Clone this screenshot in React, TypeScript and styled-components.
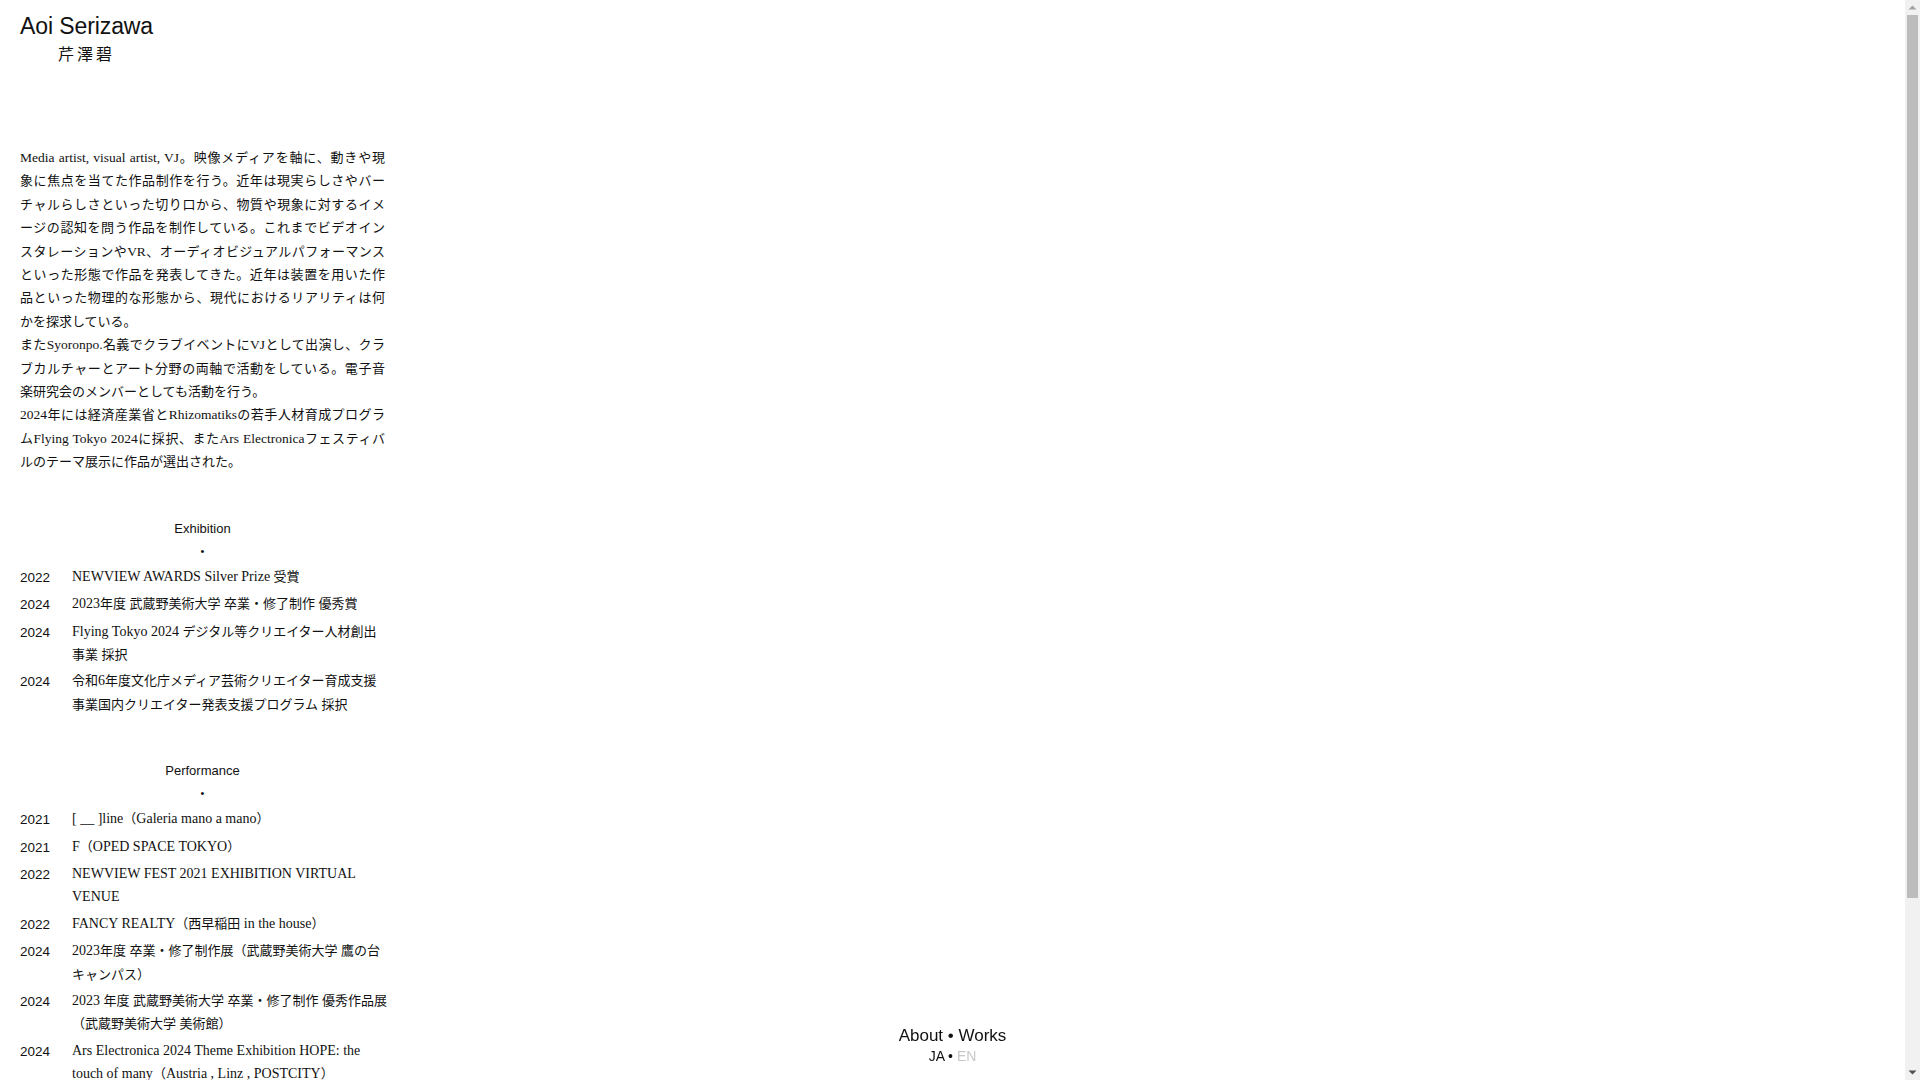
import styled, { createGlobalStyle } from 'styled-components';

interface Entry {
  year: string;
  lines: string[];
}

const bio: string[][] = [
  [
    'Media artist, visual artist, VJ。映像メディアを軸に、動きや現',
    '象に焦点を当てた作品制作を行う。近年は現実らしさやバー',
    'チャルらしさといった切り口から、物質や現象に対するイメ',
    'ージの認知を問う作品を制作している。これまでビデオイン',
    'スタレーションやVR、オーディオビジュアルパフォーマンス',
    'といった形態で作品を発表してきた。近年は装置を用いた作',
    '品といった物理的な形態から、現代におけるリアリティは何',
    'かを探求している。',
  ],
  [
    'またSyoronpo.名義でクラブイベントにVJとして出演し、クラ',
    'ブカルチャーとアート分野の両軸で活動をしている。電子音',
    '楽研究会のメンバーとしても活動を行う。',
  ],
  [
    '2024年には経済産業省とRhizomatiksの若手人材育成プログラ',
    'ムFlying Tokyo 2024に採択、またArs Electronicaフェスティバ',
    'ルのテーマ展示に作品が選出された。',
  ],
];

const exhibition: Entry[] = [
  { year: '2022', lines: ['NEWVIEW AWARDS Silver Prize 受賞'] },
  { year: '2024', lines: ['2023年度 武蔵野美術大学 卒業・修了制作 優秀賞'] },
  {
    year: '2024',
    lines: ['Flying Tokyo 2024 デジタル等クリエイター人材創出', '事業 採択'],
  },
  {
    year: '2024',
    lines: [
      '令和6年度文化庁メディア芸術クリエイター育成支援',
      '事業国内クリエイター発表支援プログラム 採択',
    ],
  },
];

const performance: Entry[] = [
  { year: '2021', lines: ['[ __ ]line（Galeria mano a mano）'] },
  { year: '2021', lines: ['F（OPED SPACE TOKYO）'] },
  { year: '2022', lines: ['NEWVIEW FEST 2021 EXHIBITION VIRTUAL', 'VENUE'] },
  { year: '2022', lines: ['FANCY REALTY（西早稲田 in the house）'] },
  {
    year: '2024',
    lines: ['2023年度 卒業・修了制作展（武蔵野美術大学 鷹の台', 'キャンパス）'],
  },
  {
    year: '2024',
    lines: ['2023 年度 武蔵野美術大学 卒業・修了制作 優秀作品展', '（武蔵野美術大学 美術館）'],
  },
  {
    year: '2024',
    lines: [
      'Ars Electronica 2024 Theme Exhibition HOPE: the',
      'touch of many（Austria , Linz , POSTCITY）',
    ],
  },
];

// latin runs use a slightly bigger serif, like the original's garamond
const LATIN = /([A-Za-z0-9.,:\[\]_ ]+)/;

function Mixed({ text, size }: { text: string; size: number }) {
  return (
    <>
      {text.split(LATIN).map((part, i) =>
        LATIN.test(part) ? (
          <Latin key={i} $size={size}>
            {part}
          </Latin>
        ) : (
          part
        ),
      )}
    </>
  );
}

function History({ title, entries }: { title: string; entries: Entry[] }) {
  return (
    <Section>
      <SectionTitle>{title}</SectionTitle>
      <Dot>•</Dot>
      <List>
        {entries.map((entry, i) => (
          <Item key={i}>
            <Year>{entry.year}</Year>
            <ItemText>
              {entry.lines.map((line, j) => (
                <span key={j}>
                  {j > 0 && <br />}
                  <Mixed text={line} size={14} />
                </span>
              ))}
            </ItemText>
          </Item>
        ))}
      </List>
    </Section>
  );
}

// the page scrolls; the window's classic scrollbar is drawn here
function Scrollbar() {
  return (
    <Track>
      <Arrow viewBox="0 0 15 15" $color="#a3a3a3">
        <path d="M3.5 9.5 L7.5 5.5 L11.5 9.5 Z" />
      </Arrow>
      <Thumb />
      <Gap />
      <Arrow viewBox="0 0 15 15" $color="#505050">
        <path d="M3.5 5.5 L7.5 9.5 L11.5 5.5 Z" />
      </Arrow>
    </Track>
  );
}

export default function App() {
  return (
    <>
      <GlobalStyle />
      <Page>
        <Header>
          <Name>Aoi Serizawa</Name>
          <NameJa>芹澤碧</NameJa>
        </Header>
        <Column>
          <Bio>
            {bio.map((para, i) => (
              <Para key={i}>
                {para.map((line, j) => (
                  <Line key={j} $fill={j < para.length - 1}>
                    <Mixed text={line} size={13.5} />
                  </Line>
                ))}
              </Para>
            ))}
          </Bio>
          <History title="Exhibition" entries={exhibition} />
          <History title="Performance" entries={performance} />
        </Column>
      </Page>
      <Nav>
        <NavMain>
          <a href="#">About</a> • <a href="#">Works</a>
        </NavMain>
        <NavLang>
          <a href="#">JA</a> • <LangOff href="#">EN</LangOff>
        </NavLang>
      </Nav>
      <Scrollbar />
    </>
  );
}

const GlobalStyle = createGlobalStyle`
  html, body {
    margin: 0;
    padding: 0;
    background: #fff;
  }
  body {
    color: #111;
    font-family: "Liberation Sans", "Noto Sans CJK JP", sans-serif;
  }
  a {
    color: inherit;
    text-decoration: none;
  }
`;

const Page = styled.div`
  padding: 12px 20px 200px;
`;

const Header = styled.header`
  display: flex;
  flex-direction: column;
`;

const Name = styled.h1`
  margin: 0;
  font-size: 23px;
  line-height: 28px;
  font-weight: 400;
  letter-spacing: -0.1px;
`;

const NameJa = styled.div`
  margin-top: 3px;
  padding-left: 38px;
  font-family: "Noto Sans CJK JP", sans-serif;
  font-size: 16px;
  line-height: 20px;
  letter-spacing: 3px;
  font-weight: 400;
`;

const Column = styled.main`
  width: 365px;
  margin-top: 83px;
`;

const Bio = styled.div`
  font-family: "Liberation Serif", "Noto Sans CJK JP", serif;
  font-size: 13px;
  line-height: 23.4px;
`;

const Para = styled.p`
  margin: 0;
`;

const Line = styled.span<{ $fill: boolean }>`
  display: block;
  text-align: ${(p) => (p.$fill ? 'justify' : 'left')};
  text-align-last: ${(p) => (p.$fill ? 'justify' : 'left')};
`;

const Latin = styled.span<{ $size: number }>`
  font-size: ${(p) => p.$size}px;
`;

const Section = styled.section`
  margin-top: 44px;
`;

const SectionTitle = styled.h2`
  margin: 0;
  font-size: 13px;
  line-height: 22px;
  font-weight: 400;
  text-align: center;
`;

const Dot = styled.div`
  font-size: 11px;
  line-height: 22px;
  text-align: center;
`;

const List = styled.ul`
  list-style: none;
  margin: 3px 0 0;
  padding: 0;
  display: flex;
  flex-direction: column;
  gap: 3px;
`;

const Item = styled.li`
  display: grid;
  grid-template-columns: 52px 1fr;
  align-items: start;
`;

const Year = styled.span`
  font-size: 13.5px;
  line-height: 23.4px;
  padding-top: 1px;
`;

const ItemText = styled.span`
  font-family: "Liberation Serif", "Noto Sans CJK JP", serif;
  font-size: 13px;
  line-height: 23.4px;
  white-space: nowrap;
`;

const Nav = styled.nav`
  position: fixed;
  left: 0;
  right: 15px;
  bottom: 15px;
  display: flex;
  flex-direction: column;
  align-items: center;
`;

const NavMain = styled.div`
  font-size: 17px;
  line-height: 22px;
`;

const NavLang = styled.div`
  font-size: 14px;
  line-height: 18px;
`;

const LangOff = styled.a`
  color: #c8c8c8;
`;

const Track = styled.div`
  position: fixed;
  top: 0;
  right: 0;
  bottom: 0;
  width: 15px;
  background: #f1f1f1;
  display: flex;
  flex-direction: column;
`;

const Arrow = styled.svg<{ $color: string }>`
  width: 15px;
  height: 15px;
  flex: none;
  fill: ${(p) => p.$color};
`;

const Thumb = styled.div`
  flex: none;
  height: 883px;
  margin: 0 2px;
  background: #bcbcbc;
`;

const Gap = styled.div`
  flex: 1;
`;
